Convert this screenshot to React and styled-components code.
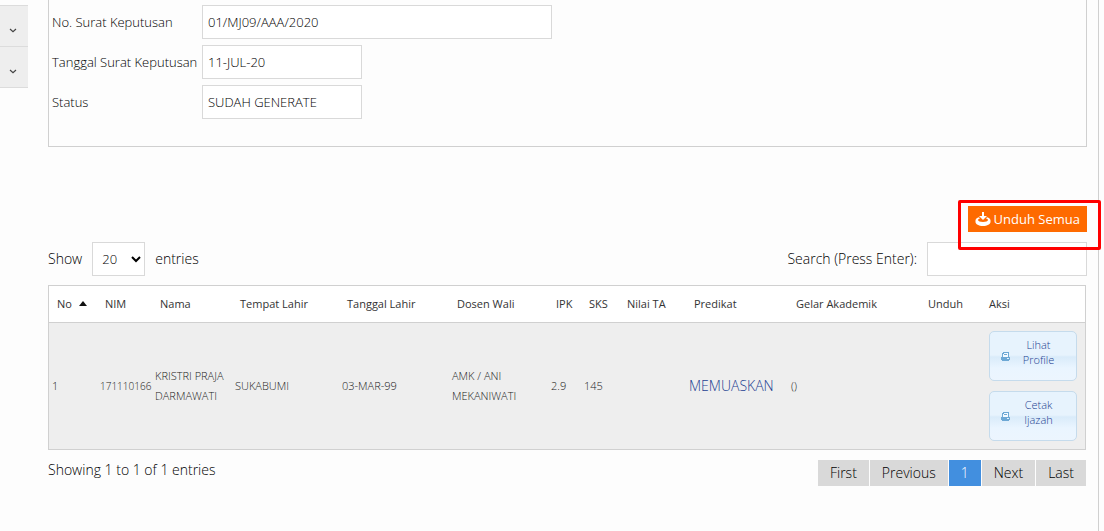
import React from "react";
import styled, { createGlobalStyle } from "styled-components";

const GlobalStyle = createGlobalStyle`
  *, *::before, *::after { box-sizing: border-box; }
  body {
    margin: 0;
    background: #fdfdfd;
    color: #000;
    font-family: "Open Sans", "Noto Sans", sans-serif;
    font-size: 14px;
    font-weight: 300;
    line-height: 20px;
  }
  button, input, select { font: inherit; color: inherit; margin: 0; border-radius: 0; }
`;

const Page = styled.div`
  display: flex;
  align-items: stretch;
  min-height: 100vh;
  padding-right: 5px;
`;

const Sidebar = styled.nav`
  flex: 0 0 28px;
  padding-top: 5px;
`;

const SidebarToggle = styled.button`
  display: flex;
  align-items: center;
  justify-content: center;
  width: 100%;
  height: 41px;
  padding: 9px 2px 0 0;
  border: 0;
  border-top: 1px solid #dcdcdc;
  background: #eee;
  color: #444;
  &:last-child { height: 42px; border-bottom: 1px solid #dcdcdc; }
`;

const Main = styled.main`
  flex: 1;
  min-width: 0;
  padding: 0 11px 0 20px;
  border-right: 1px solid #d0d0d0;
`;

const DetailForm = styled.form`
  display: flex;
  flex-direction: column;
  gap: 6px;
  padding: 5px 3px 27px;
  border: 1px solid #d0d0d0;
  border-top: 0;
`;

const Field = styled.div`
  display: flex;
  align-items: center;
  font-size: 13px;
`;

const FieldLabel = styled.label`
  flex: 0 0 150px;
`;

const TextBox = styled.input`
  width: ${(p) => (p.$wide ? "350px" : "160px")};
  height: 34px;
  padding: 0 5px;
  border: 1px solid #d9d9d9;
  background: #fff;
  outline: 0;
`;

const ActionBar = styled.div`
  display: flex;
  justify-content: flex-end;
  margin-top: 59px;
`;

const Highlight = styled.div`
  position: relative;
  &::after {
    content: "";
    position: absolute;
    inset: -6px -14px -18px -10px;
    border: 3px solid #ff0000;
    border-radius: 2px;
    pointer-events: none;
  }
`;

const DownloadButton = styled.button`
  display: flex;
  align-items: center;
  gap: 3px;
  height: 26px;
  padding: 0 7px;
  border: 0;
  background: #fe6a00;
  color: #fff;
  font-size: 13px;
  font-weight: 400;
`;

const Toolbar = styled.div`
  display: flex;
  justify-content: space-between;
  margin-top: 10px;
`;

const ToolLabel = styled.label`
  display: flex;
  align-items: center;
  gap: 10px;
`;

const LengthSelect = styled.select`
  width: 53px;
  height: 34px;
  padding: 0 0 0 5px;
  border: 1px solid #d9d9d9;
  background: #fff;
  font-size: 13px;
`;

const DataTable = styled.table`
  width: calc(100% - 1px);
  margin-top: 9px;
  border: 1px solid #d0d0d0;
  border-spacing: 0;
  table-layout: fixed;
  font-size: 11px;
`;

const HeadCell = styled.th`
  height: 37px;
  padding: 0 0 0 8px;
  border-bottom: 1px solid #d0d0d0;
  background: #fff;
  color: #333;
  font-weight: 400;
  text-align: left;
  white-space: nowrap;
`;

const SortArrow = styled.span`
  display: inline-block;
  margin: 0 0 2px 7px;
  border: 4px solid transparent;
  border-top: 0;
  border-bottom: 5px solid #111;
`;

const Cell = styled.td`
  padding: 0 0 0 3px;
  background: #eee;
  color: #222;
  font-size: ${(p) => (p.$compact ? "10px" : "inherit")};
`;

const PredicateLink = styled.a`
  color: #1d3f91;
  font-size: 14px;
  text-decoration: none;
`;

const RowActions = styled.div`
  display: flex;
  flex-direction: column;
  gap: 10px;
  padding: 8px 8px 8px 5px;
`;

const RowButton = styled.button`
  display: grid;
  grid-template-columns: 31px 1fr;
  align-items: center;
  height: 50px;
  padding: 0 20px 0 0;
  border: 1px solid #c5dbec;
  border-radius: 5px;
  background: linear-gradient(#e7f3fd 0, #e7f3fd 48%, #d9ebfa 52%, #eaf5ff 75%, #ecf5fe 100%);
  color: #1d3f91;
  font-size: 11px;
  line-height: 15px;
  text-align: center;
  svg { justify-self: center; }
  span { padding-bottom: 8px; }
`;

const Footer = styled.div`
  display: flex;
  justify-content: space-between;
  align-items: flex-start;
  padding: 10px 1px 0 0;
`;

const Pager = styled.nav`
  display: flex;
  gap: 1px;
`;

const PageButton = styled.button`
  height: 26px;
  padding: 0 12px;
  border: 0;
  background: ${(p) => (p.$current ? "#428fdf" : "#d9d9d9")};
  color: ${(p) => (p.$current ? "#fff" : "#000")};
`;

const Chevron = () => (
  <svg width="8" height="5" viewBox="0 0 8 5" aria-hidden="true">
    <path d="M1 1l3 2.6L7 1" fill="none" stroke="currentColor" strokeWidth="1.2" />
  </svg>
);

const DownloadIcon = () => (
  <svg width="16" height="14" viewBox="0 0 16 14" fill="#fff" aria-hidden="true">
    <path d="M7 0h2v4h3L8 8 4 4h3z" />
    <path d="M4 5.200C1.800 5.900 0.500 7 0.500 8.300v1.700C0.500 12.200 3.800 14 8 14s7.500-1.800 7.500-4V8.300C15.500 7 14.200 5.900 12 5.200l-1 1.300c1.300 0.400 2 0.900 2 1.500 0 1.100-2.200 2-5 2s-5-0.900-5-2c0-0.600 0.700-1.100 2-1.500z" />
  </svg>
);

const PrintIcon = () => (
  <svg width="9" height="9" viewBox="0 0 9 9" shapeRendering="crispEdges" aria-hidden="true">
    <path d="M2 0h6v5H1V1h1z" fill="#6da8d5" />
    <path d="M3 1h4v4H2V2h1z" fill="#f4faff" />
    <path d="M3 2h3v1H3z" fill="#6da8d5" />
    <path d="M0 5h9v3H8v1H1V8H0z" fill="#6da8d5" />
    <path d="M6 6h2v1H6z" fill="#e7f3fd" />
  </svg>
);

const fields = [
  { id: "no-sk", label: "No. Surat Keputusan", value: "01/MJ09/AAA/2020", wide: true },
  { id: "tgl-sk", label: "Tanggal Surat Keputusan", value: "11-JUL-20" },
  { id: "status", label: "Status", value: "SUDAH GENERATE" },
];

const columns = [
  ["No", 48], ["NIM", 55], ["Nama", 80], ["Tempat Lahir", 107], ["Tanggal Lahir", 110],
  ["Dosen Wali", 99], ["IPK", 33], ["SKS", 38], ["Nilai TA", 67], ["Predikat", 102],
  ["Gelar Akademik", 132], ["Unduh", 61], ["Aksi", 104],
];

const sidebarGroups = ["Menu 1", "Menu 2"];
const pages = ["First", "Previous", "1", "Next", "Last"];
const rowActions = [["Lihat", "Profile"], ["Cetak", "Ijazah"]];

export default function App() {
  return (
    <>
      <GlobalStyle />
      <Page>
        <Sidebar>
          {sidebarGroups.map((g) => (
            <SidebarToggle key={g} type="button" aria-label={g}><Chevron /></SidebarToggle>
          ))}
        </Sidebar>
        <Main>
          <DetailForm>
            {fields.map((f) => (
              <Field key={f.id}>
                <FieldLabel htmlFor={f.id}>{f.label}</FieldLabel>
                <TextBox id={f.id} $wide={f.wide} defaultValue={f.value} />
              </Field>
            ))}
          </DetailForm>
          <ActionBar>
            <Highlight>
              <DownloadButton type="button"><DownloadIcon />Unduh Semua</DownloadButton>
            </Highlight>
          </ActionBar>
          <Toolbar>
            <ToolLabel>
              Show
              <LengthSelect defaultValue="20"><option>20</option></LengthSelect>
              entries
            </ToolLabel>
            <ToolLabel>
              Search (Press Enter):
              <TextBox type="text" />
            </ToolLabel>
          </Toolbar>
          <DataTable>
            <colgroup>
              {columns.map(([name, width]) => <col key={name} width={width} />)}
            </colgroup>
            <thead>
              <tr>
                {columns.map(([name], i) => (
                  <HeadCell key={name} scope="col">{name}{i === 0 && <SortArrow />}</HeadCell>
                ))}
              </tr>
            </thead>
            <tbody>
              <tr>
                <Cell>1</Cell>
                <Cell $compact>171110166</Cell>
                <Cell>KRISTRI PRAJA DARMAWATI</Cell>
                <Cell>SUKABUMI</Cell>
                <Cell>03-MAR-99</Cell>
                <Cell>AMK / ANI MEKANIWATI</Cell>
                <Cell>2.9</Cell>
                <Cell>145</Cell>
                <Cell />
                <Cell><PredicateLink href="#predikat">MEMUASKAN</PredicateLink></Cell>
                <Cell>()</Cell>
                <Cell />
                <Cell>
                  <RowActions>
                    {rowActions.map(([top, bottom]) => (
                      <RowButton key={top} type="button">
                        <PrintIcon />
                        <span>{top}<br />{bottom}</span>
                      </RowButton>
                    ))}
                  </RowActions>
                </Cell>
              </tr>
            </tbody>
          </DataTable>
          <Footer>
            <div>Showing 1 to 1 of 1 entries</div>
            <Pager>
              {pages.map((p) => (
                <PageButton key={p} type="button" $current={p === "1"}>{p}</PageButton>
              ))}
            </Pager>
          </Footer>
        </Main>
      </Page>
    </>
  );
}
